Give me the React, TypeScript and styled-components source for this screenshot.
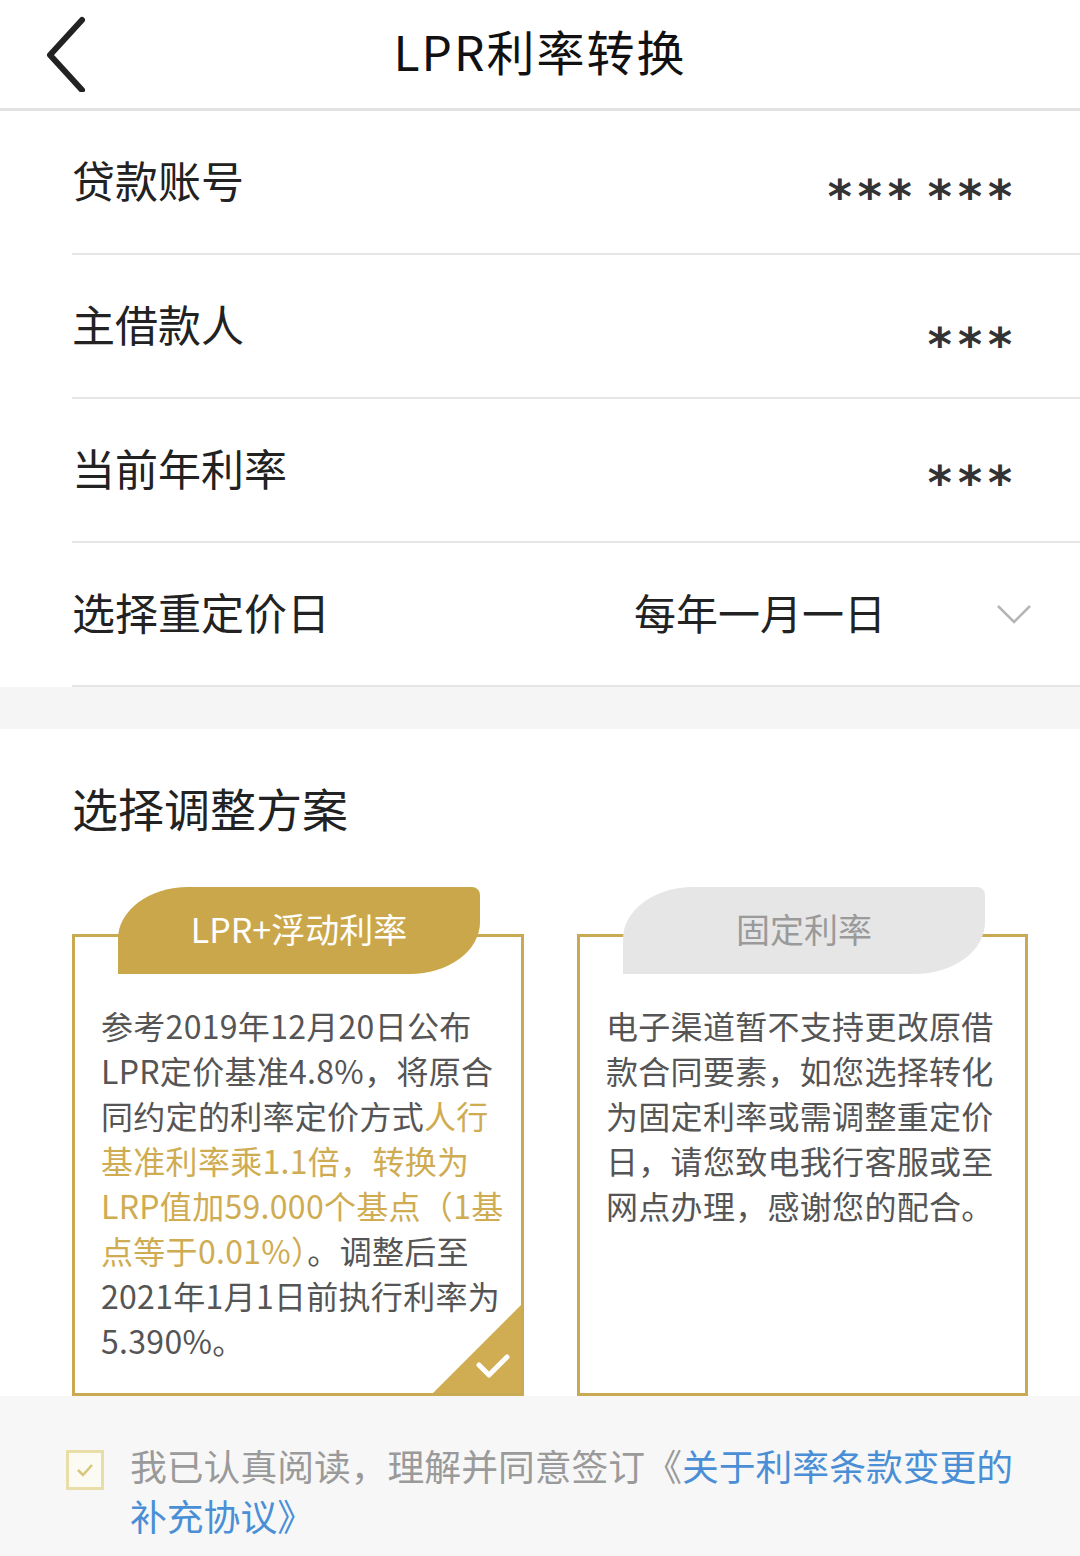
import React from 'react';
import styled, { createGlobalStyle } from 'styled-components';

const GlobalStyle = createGlobalStyle`
  body {
    margin: 0;
    background: #ffffff;
    font-family: 'Noto Sans CJK SC', 'Noto Sans', sans-serif;
  }
`;

const Page = styled.div`
  width: 1080px;
  min-height: 1556px;
  background: #f7f7f7;
  display: flex;
  flex-direction: column;
`;

const Header = styled.div`
  height: 108px;
  display: grid;
  grid-template-columns: 1fr auto 1fr;
  align-items: center;
  background: #fff;
  border-bottom: 3px solid #e2e2e2;
`;

const BackButton = styled.div`
  padding-left: 40px;
  display: flex;
  align-items: center;
`;

const Title = styled.div`
  font-size: 48px;
  color: #111;
  letter-spacing: 2px;
  padding-bottom: 8px;
`;

const InfoList = styled.div`
  background: #fff;
  padding-left: 72px;
`;

const Row = styled.div`
  height: 142px;
  border-bottom: 2px solid #e6e6e6;
  display: flex;
  align-items: center;
  justify-content: space-between;
  padding-right: 66px;
`;

const Label = styled.div`
  font-size: 43px;
  color: #222;
  padding-bottom: 6px;
`;

const Stars = styled.div<{ $offset: number }>`
  font-family: 'DejaVu Sans', sans-serif;
  font-size: 46px;
  font-weight: bold;
  color: #333;
  letter-spacing: 6px;
  word-spacing: -12px;
  white-space: pre;
  margin-right: -4px;
  padding-top: ${(p) => p.$offset}px;
`;

const SelectValue = styled.div`
  display: flex;
  align-items: center;
  margin-right: -18px;
`;

const SelectText = styled.div`
  font-size: 42px;
  color: #222;
  margin-right: 110px;
  padding-bottom: 6px;
`;

const GapBand = styled.div`
  height: 42px;
  background: #f5f5f5;
`;

const PlanSection = styled.div`
  background: #fff;
  padding: 50px 52px 0 72px;
`;

const SectionTitle = styled.div`
  font-size: 46px;
  color: #222;
  line-height: 56px;
  margin-bottom: 52px;
`;

const Cards = styled.div`
  display: grid;
  grid-template-columns: 452px 451px;
  column-gap: 53px;
`;

const CardWrap = styled.div`
  position: relative;
  padding-top: 47px;
`;

const Tab = styled.div<{ $active: boolean }>`
  position: absolute;
  top: 0;
  left: 46px;
  width: 362px;
  height: 87px;
  border-radius: 70px 8px 70px 0 / 52px 8px 52px 0;
  background: ${(p) => (p.$active ? '#cba74c' : '#e6e6e6')};
  color: ${(p) => (p.$active ? '#fff' : '#9a9a9a')};
  font-size: 34px;
  display: flex;
  align-items: center;
  justify-content: center;
  padding-bottom: 4px;
  box-sizing: border-box;
`;

const CardBox = styled.div`
  height: 462px;
  box-sizing: border-box;
  border: 3px solid #c9aa52;
  padding: 66px 10px 0 26px;
  overflow: hidden;
  position: relative;
`;

const Line = styled.div`
  font-size: 32px;
  line-height: 45px;
  color: #555;
  white-space: nowrap;
  letter-spacing: 0.3px;
`;

const Gold = styled.span`
  color: #cfac52;
`;

const Corner = styled.div`
  position: absolute;
  right: 0;
  bottom: 0;
  width: 88px;
  height: 88px;
`;

const Agreement = styled.div`
  flex: 1;
  background: #f7f7f7;
  display: flex;
  align-items: flex-start;
  padding: 44px 0 0 66px;
`;

const CheckBox = styled.div`
  width: 38px;
  height: 40px;
  box-sizing: border-box;
  border: 3px solid #e9dda8;
  margin-top: 10px;
  margin-right: 26px;
  display: flex;
  align-items: center;
  justify-content: center;
  background: #fbfaf3;
`;

const AgreeText = styled.div`
  width: 905px;
  font-size: 36.8px;
  line-height: 50px;
  color: #9a9a9a;
`;

const Link = styled.span`
  color: #4a8fd6;
`;

const stars = [
  { label: '贷款账号', value: '*** ***', offset: 30 },
  { label: '主借款人', value: '***', offset: 38 },
  { label: '当前年利率', value: '***', offset: 26 },
];

export default function App() {
  return (
    <Page>
      <GlobalStyle />
      <Header>
        <BackButton>
          <svg width="50" height="76" viewBox="0 0 50 76">
            <path
              d="M42 4 L10 39 L42 74"
              fill="none"
              stroke="#222"
              strokeWidth="6"
              strokeLinecap="round"
              strokeLinejoin="round"
            />
          </svg>
        </BackButton>
        <Title>LPR利率转换</Title>
        <div />
      </Header>

      <InfoList>
        {stars.map((r) => (
          <Row key={r.label}>
            <Label>{r.label}</Label>
            <Stars $offset={r.offset}>{r.value}</Stars>
          </Row>
        ))}
        <Row>
          <Label>选择重定价日</Label>
          <SelectValue>
            <SelectText>每年一月一日</SelectText>
            <svg width="36" height="22" viewBox="0 0 36 22">
              <path d="M2 3 L18 19 L34 3" fill="none" stroke="#b5b5b5" strokeWidth="2.5" />
            </svg>
          </SelectValue>
        </Row>
      </InfoList>

      <GapBand />

      <PlanSection>
        <SectionTitle>选择调整方案</SectionTitle>
        <Cards>
          <CardWrap>
            <CardBox>
              <Line>参考2019年12月20日公布</Line>
              <Line>LPR定价基准4.8%，将原合</Line>
              <Line>
                同约定的利率定价方式<Gold>人行</Gold>
              </Line>
              <Line>
                <Gold>基准利率乘1.1倍，转换为</Gold>
              </Line>
              <Line>
                <Gold>LRP值加59.000个基点（1基</Gold>
              </Line>
              <Line>
                <Gold>点等于0.01%）</Gold>。调整后至
              </Line>
              <Line>2021年1月1日前执行利率为</Line>
              <Line>5.390%。</Line>
              <Corner>
                <svg width="88" height="88" viewBox="0 0 88 88">
                  <path d="M88 0 L88 88 L0 88 Z" fill="#d0ad52" />
                  <path
                    d="M46 60 L56 70 L74 52"
                    fill="none"
                    stroke="#fff"
                    strokeWidth="5"
                    strokeLinecap="round"
                    strokeLinejoin="round"
                  />
                </svg>
              </Corner>
            </CardBox>
            <Tab $active>LPR+浮动利率</Tab>
          </CardWrap>
          <CardWrap>
            <CardBox>
              <Line>电子渠道暂不支持更改原借</Line>
              <Line>款合同要素，如您选择转化</Line>
              <Line>为固定利率或需调整重定价</Line>
              <Line>日，请您致电我行客服或至</Line>
              <Line>网点办理，感谢您的配合。</Line>
            </CardBox>
            <Tab $active={false}>固定利率</Tab>
          </CardWrap>
        </Cards>
      </PlanSection>

      <Agreement>
        <CheckBox>
          <svg width="20" height="16" viewBox="0 0 20 16">
            <path d="M3 8 L8 13 L17 3" fill="none" stroke="#d8c67c" strokeWidth="2.5" />
          </svg>
        </CheckBox>
        <AgreeText>
          我已认真阅读，理解并同意签订《<Link>关于利率条款变更的补充协议》</Link>
        </AgreeText>
      </Agreement>
    </Page>
  );
}
